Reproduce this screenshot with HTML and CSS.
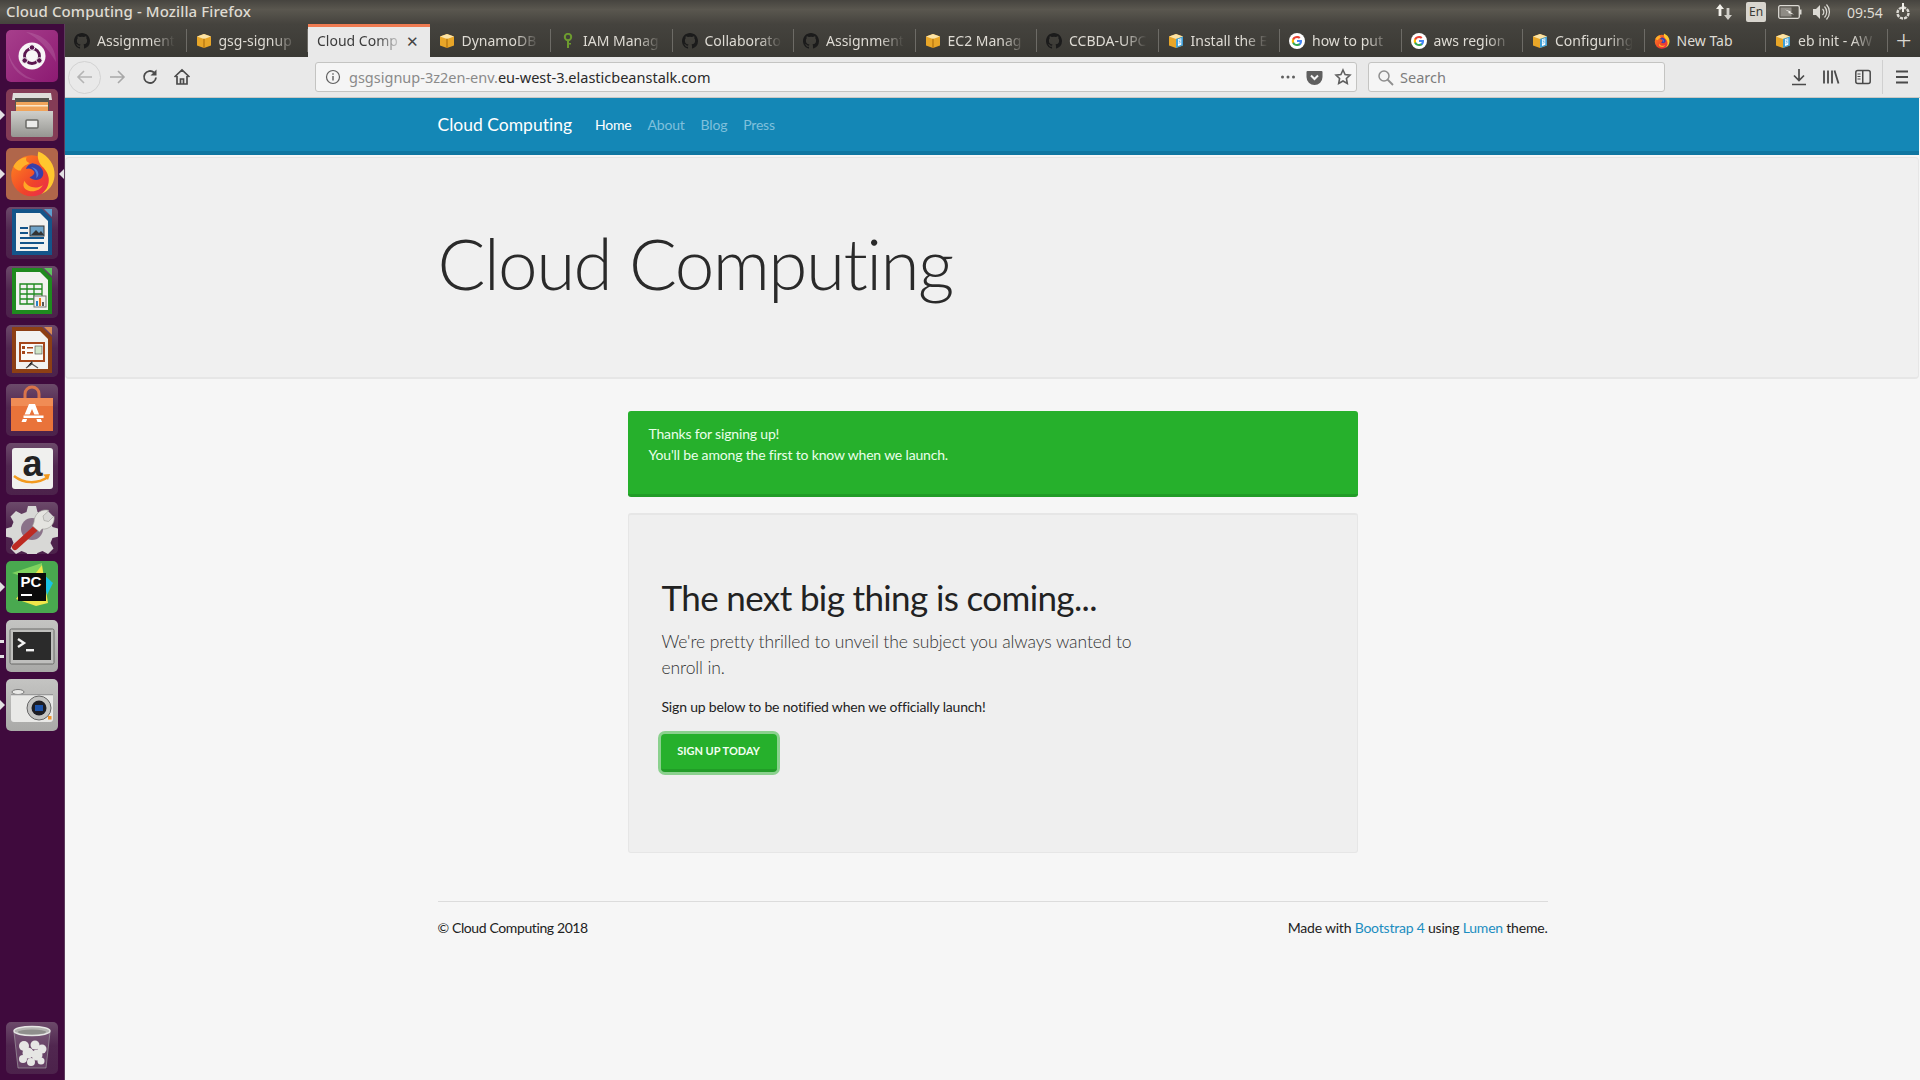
FILE: index.html
```html
<!DOCTYPE html>
<html lang="en">
<head>
<meta charset="utf-8">
<title>Cloud Computing</title>
<link rel="stylesheet" href="styles.css">
</head>
<body>
<svg class="defs" width="0" height="0" aria-hidden="true">
  <defs>
    <linearGradient id="fxbody" x1="0" y1="0" x2="1" y2="1"><stop offset="0" stop-color="#ff8a1f"/><stop offset=".6" stop-color="#f0442a"/><stop offset="1" stop-color="#e8245a"/></linearGradient>
    <linearGradient id="steel" x1="0" y1="0" x2="0" y2="1"><stop offset="0" stop-color="#cfcfcb"/><stop offset="1" stop-color="#969692"/></linearGradient>
  </defs>
  <symbol id="gh" viewBox="0 0 16 16"><path fill="#1b1b1b" d="M8 0C3.58 0 0 3.58 0 8c0 3.54 2.29 6.53 5.47 7.59.4.07.55-.17.55-.38v-1.49c-2.23.48-2.7-1.07-2.7-1.07-.36-.92-.89-1.17-.89-1.17-.73-.5.05-.49.05-.49.8.06 1.23.83 1.23.83.72 1.22 1.87.87 2.33.66.07-.52.28-.87.5-1.07-1.78-.2-3.64-.89-3.64-3.95 0-.87.31-1.59.82-2.15-.08-.2-.36-1.02.08-2.12 0 0 .67-.21 2.2.82a7.6 7.6 0 0 1 4 0c1.53-1.04 2.2-.82 2.2-.82.44 1.1.16 1.92.08 2.12.51.56.82 1.27.82 2.15 0 3.07-1.87 3.75-3.65 3.95.29.25.54.73.54 1.48v2.2c0 .21.15.46.55.38A8 8 0 0 0 16 8c0-4.42-3.58-8-8-8z"/></symbol>
  <symbol id="box" viewBox="0 0 16 16"><path fill="#e8a628" d="M1 3.5 8 1l7 2.5v9L8 15l-7-2.5z"/><path fill="#fbe3a6" d="M1 3.5 8 1l7 2.5L8 6z"/><path fill="#b97a12" d="M7.3 5.8h1.4V15H7.3z"/></symbol>
  <symbol id="doc" viewBox="0 0 16 16"><path fill="#e8a628" d="M1 3.5 8 1l7 2.5v9L8 15l-7-2.5z"/><path fill="#fbe3a6" d="M1 3.5 8 1l7 2.5L8 6z"/><path fill="#3f9fd8" d="M8 6l7-2.5v9L8 15z"/><path fill="#fff" d="M10 6.3l3.3-1.1v6.5L10 12.9z"/><path stroke="#3f9fd8" stroke-width=".7" d="M10.6 7.3l2.1-.7M10.6 8.8l2.1-.7M10.6 10.3l2.1-.7"/></symbol>
  <symbol id="goog" viewBox="0 0 16 16"><circle cx="8" cy="8" r="8" fill="#fff"/><path fill="#4285f4" d="M13 8.1c0-.4 0-.7-.1-1H8v2h2.8c-.1.6-.5 1.2-1 1.5v1.3h1.7c1-.9 1.5-2.2 1.5-3.8z"/><path fill="#34a853" d="M8 13c1.4 0 2.5-.5 3.5-1.1l-1.7-1.3c-.5.3-1.1.5-1.8.5-1.4 0-2.5-.9-2.9-2.2H3.3v1.4C4.2 12 6 13 8 13z"/><path fill="#fbbc05" d="M5.1 8.9c-.2-.6-.2-1.2 0-1.8V5.7H3.3c-.7 1.4-.7 3.1 0 4.6z"/><path fill="#ea4335" d="M8 5c.8 0 1.5.3 2 .8l1.5-1.5C10.600 3.500 9.400 3 8 3 6 3 4.200 4.100 3.300 5.700l1.800 1.400C5.500 5.900 6.600 5 8 5z"/></symbol>
  <symbol id="fx" viewBox="0 0 32 32"><circle cx="15.500" cy="17.500" r="14" fill="url(#fxbody)"/><path fill="#ffc72e" d="M20 1c7 3 11.500 9 11 16.500-.4 6-4 10.500-9 12.500 4-3 5.500-7 5-11-.5-4-3-6.500-5-8.500C20 8 19 4.500 20 1z"/><path fill="#ffb02a" d="M3 11c2-3 5-6 9-6-1 2 0 3 2 4-2 1-5 2-6 5-2 0-4-1-5-3z"/><path fill="#3a3fa8" d="M16 9c-2 .5-4 2-4.500 4 2-1 4.500 0 5.500 1.500s-1 3.500-3 4c2.500 2.500 6.500 2.500 8.500 0s1-8-6.500-9.500z"/><path fill="#4d7be0" d="M15 11.500c3 .5 5 2.500 5 5 0 1-.5 2-1.500 2.500 1-3-1-6-3.500-7.500z"/><path fill="#ffa726" d="M10.500 21c2 4.500 8 6 12.500 3-2 4-8 5.500-12 2.500-1.500-1.500-1.500-3-.5-5.500z"/></symbol>
</svg>

<header class="topbar">
  <span class="win-title">Cloud Computing - Mozilla Firefox</span>
  <div class="tray">
    <svg class="tray-net" width="20" height="20" viewBox="0 0 20 20"><path fill="#f2f0ea" d="M6 2 2 7h2.600v7h2.800V7H10z"/><path fill="#d0cec8" d="M14 18l4-5h-2.600V6h-2.800v7H10z"/></svg>
    <span class="tray-en">En</span>
    <svg class="tray-bat" width="24" height="16" viewBox="0 0 24 16"><rect x=".7" y="1.700" width="20.600" height="12.600" rx="1.500" fill="none" stroke="#dcdad4" stroke-width="1.300"/><rect x="2.500" y="3.500" width="11" height="9" fill="#8f8c85"/><rect x="21.500" y="5.500" width="2" height="5" fill="#dcdad4"/><path fill="#f2f0ea" d="M7 5.500l6 2-1 .5 4 2.500-6-1.500 1-1z"/></svg>
    <svg class="tray-vol" width="20" height="20" viewBox="0 0 20 20"><path fill="#dcdad4" d="M2 7h3l4-4v14l-4-4H2z"/><path fill="none" stroke="#dcdad4" stroke-width="1.200" d="M11.500 7a4 4 0 0 1 0 6M13.500 4.500a8 8 0 0 1 0 11M15.500 2.500a11 11 0 0 1 0 15" /></svg>
    <span class="tray-time">09:54</span>
    <svg class="tray-gear" width="18" height="20" viewBox="0 0 18 20"><circle cx="9" cy="11" r="5.500" fill="none" stroke="#dcdad4" stroke-width="2.400" stroke-dasharray="3.200 1"/><path stroke="#f2f0ea" stroke-width="2" d="M9 1v9"/></svg>
  </div>
</header>

<div class="desktop">
  <nav class="dock">
    <div class="tile t-ubuntu"><svg viewBox="0 0 52 52"><path fill="rgba(255,255,255,.12)" d="M20 2c18 2 30 14 30 30-8-14-18-24-30-30zM2 22c4 14 14 24 28 28C16 50 4 38 2 22z"/><circle cx="26" cy="26" r="13.500" fill="#f8f5f7"/><circle cx="26" cy="26" r="7.500" fill="none" stroke="#5b1650" stroke-width="2.800"/><circle cx="26" cy="17.500" r="2.800" fill="#5b1650" stroke="#f8f5f7"/><circle cx="18.700" cy="30.500" r="2.800" fill="#5b1650" stroke="#f8f5f7"/><circle cx="33.300" cy="30.500" r="2.800" fill="#5b1650" stroke="#f8f5f7"/></svg></div>
    <div class="tile t-files has-pip"><svg viewBox="0 0 52 52"><path fill="#dededa" d="M7 4h38l1 7H6z"/><path fill="#55554f" d="M9 9h34v12H9z"/><path fill="#f0a45a" d="M10 13h32v9H10z"/><path fill="#fbe6c8" d="M10 16h32v1.500H10z"/><path fill="url(#steel)" d="M5 22h42v24a2 2 0 0 1-2 2H7a2 2 0 0 1-2-2z"/><rect x="20" y="31" width="12" height="8" rx="1" fill="#ececea" stroke="#6a6a66" stroke-width="1.500"/></svg></div>
    <div class="tile t-fx has-pip has-pip-right"><svg viewBox="0 0 52 52"><use href="#fx" x="3" y="2" width="47" height="47"/></svg></div>
    <div class="tile t-glass"><svg viewBox="0 0 52 52"><path fill="#14558a" d="M6 2h30l10 10v36H6z"/><path fill="#f2f2f0" d="M10 6h24l8 8v30H10z"/><path fill="#5d9fd0" d="M38 2h8v8z"/><path fill="#14558a" d="M14 20h8v2h-8zM14 25h8v2h-8zM14 30h24v2H14zM14 35h24v2H14zM14 40h18v2H14z"/><rect x="24" y="19" width="14" height="10" fill="#6fa3c8" stroke="#333"/><path fill="#333" d="M25 28l5-5 3 3 2-2 3 4z"/></svg></div>
    <div class="tile t-glass"><svg viewBox="0 0 52 52"><path fill="#1f8a1f" d="M6 2h30l10 10v36H6z"/><path fill="#f2f2f0" d="M10 6h24l8 8v30H10z"/><path fill="#5fc35f" d="M38 2h8v8z"/><path fill="none" stroke="#1f8a1f" stroke-width="1.300" d="M14 18h22v20H14zM14 23h22M14 28h22M14 33h22M21 18v20M28 18v20"/><rect x="28" y="30" width="12" height="11" fill="#f2f2f0" stroke="#777"/><path fill="#2b7fc7" d="M30 35h2v5h-2z"/><path fill="#e77b1f" d="M33 32h2v8h-2z"/><path fill="#555" d="M36 36h2v4h-2z"/></svg></div>
    <div class="tile t-glass"><svg viewBox="0 0 52 52"><path fill="#8d3f14" d="M6 2h30l10 10v36H6z"/><path fill="#f2f2f0" d="M10 6h24l8 8v30H10z"/><path fill="#d98a55" d="M38 2h8v8z"/><rect x="14" y="18" width="24" height="18" fill="#fbfbf8" stroke="#a5461a" stroke-width="2"/><path fill="#a5461a" d="M16 21h3v3h-3zM16 26h3v3h-3zM21 22h6v1.500h-6zM21 27h6v1.500h-6z"/><rect x="29" y="21" width="7" height="8" fill="#cfe5c8" stroke="#444" stroke-width=".6"/><path stroke="#555" stroke-width="1.200" d="M26 36v3l-6 4M26 39l6 4"/></svg></div>
    <div class="tile t-glass"><svg viewBox="0 0 52 52"><path fill="none" stroke="#d9744a" stroke-width="3" d="M19 16v-6a7 7 0 0 1 14 0v6"/><path fill="#e9733a" d="M5 14h42v33H5z"/><path fill="#f08c55" d="M5 14h42v8H5z"/><path fill="#fff" d="M23 20h6l7 18h-4.500l-1.500-4h-8.500l-1.500 4h-4.500zM26 25l-2.500 6h5z"/><rect x="17" y="31" width="21" height="3.500" fill="#fff" stroke="#e9733a"/></svg></div>
    <div class="tile t-glass"><svg viewBox="0 0 52 52"><rect x="6" y="5" width="41" height="41" rx="3" fill="#f0f0ee"/><text class="amz" x="26.500" y="33" text-anchor="middle">a</text><path fill="none" stroke="#f29a1f" stroke-width="2.500" d="M8 33c10 8 24 8 34 1"/><path fill="#f29a1f" d="M37 31.500l7-.5-2 6z"/></svg></div>
    <div class="tile t-glass"><svg viewBox="0 0 52 52"><path fill="#d8d8d6" d="M22 4h8l1.500 6 5 2 5.500-3 5.500 5.500-3 5.500 2 5 6 1.500v8l-6 1.500-2 5 3 5.500-5.500 5.500-5.500-3-5 2-1.500 2h-8l-1.500-2-5-2-5.500 3-5.500-5.500 3-5.500-2-5-6-1.500v-8l6-1.500 2-5-3-5.500 5.500-5.500 5.500 3 5-2z"/><circle cx="26" cy="27" r="11" fill="#8a7289"/><path stroke="#bd2a22" stroke-width="6" stroke-linecap="round" d="M9 45l21-19"/><path fill="#e4e4e0" stroke="#9a9a96" stroke-width=".6" d="M28 20c0-7 6-13 13-12l2 .5-6 5.500 1 4.500 4.500 1 5.500-5.500c1.500 8-5 14-12 13l-2.500 3-7-6z"/></svg></div>
    <div class="tile t-pycharm has-pip"><svg viewBox="0 0 52 52"><path fill="#7fd35f" d="M6 12l30-10v20z"/><path fill="#f0e64a" d="M10 38l26-34 6 38-12 3z"/><path fill="#19c3e6" d="M36 12l11 10-6 12z"/><rect x="12" y="12" width="28" height="28" fill="#0b0b0b"/><text class="pc" x="14.500" y="26">PC</text><rect x="15" y="33" width="11" height="2" fill="#fff"/></svg></div>
    <div class="tile t-term has-pip has-pip-double"><svg viewBox="0 0 52 52"><rect x="4" y="9" width="44" height="35" rx="1.500" fill="#bfbfbd" stroke="#6a6a68"/><rect x="7" y="12" width="38" height="28" fill="#2b2b2b"/><path fill="none" stroke="#f2f2f2" stroke-width="2.400" d="M12 19l6 4-6 4"/><rect x="20" y="29" width="8" height="2.400" fill="#f2f2f2"/></svg></div>
    <div class="tile t-term has-pip"><svg viewBox="0 0 52 52"><path fill="#e9e9e7" d="M5 15h42v25a3 3 0 0 1-3 3H8a3 3 0 0 1-3-3z"/><ellipse cx="12" cy="13" rx="6" ry="2.500" fill="#e9e9e7" stroke="#777"/><path fill="#999" d="M5 15h42v1.200H5z"/><circle cx="33" cy="29" r="12" fill="#c4c4c2" stroke="#666"/><circle cx="33" cy="29" r="7.500" fill="#1d1d24"/><rect x="29" y="26" width="8" height="6" fill="#1c52a8"/><rect x="42" y="37" width="3.500" height="3.500" fill="#f0932b"/></svg></div>
    <div class="tile t-glass t-trash"><svg viewBox="0 0 52 52"><path fill="rgba(255,255,255,.14)" stroke="#aaa" stroke-width=".6" d="M8 10l4 36h28l4-36z"/><ellipse cx="26" cy="9" rx="18" ry="4.500" fill="#b5b5b2" stroke="#e6e6e4" stroke-width="1.500"/><ellipse cx="26" cy="10" rx="14" ry="2.500" fill="#8f8f8c"/><g fill="#e6e6e4"><circle cx="18" cy="24" r="5"/><circle cx="29" cy="23" r="4.500"/><circle cx="36" cy="27" r="4.500"/><circle cx="22" cy="31" r="5.500"/><circle cx="31" cy="33" r="5.500"/><circle cx="17" cy="37" r="4"/><circle cx="25" cy="40" r="4"/><circle cx="35" cy="39" r="3.500"/></g></svg></div>
  </nav>

  <div class="browser">
    <div class="tabstrip">
      <div class="tab"><svg class="fav"><use href="#gh"/></svg><span class="tab-label">Assignment</span></div>
      <div class="tab"><svg class="fav"><use href="#box"/></svg><span class="tab-label">gsg-signup</span></div>
      <div class="tab tab-active"><span class="tab-label">Cloud Comp</span><span class="tab-x">✕</span></div>
      <div class="tab"><svg class="fav"><use href="#box"/></svg><span class="tab-label">DynamoDB</span></div>
      <div class="tab"><svg class="fav" viewBox="0 0 16 16"><circle cx="8" cy="4" r="3.200" fill="none" stroke="#6d9b2f" stroke-width="2"/><path fill="#6d9b2f" d="M7 7h2v8H7zM9 10h2v1.500H9z"/></svg><span class="tab-label">IAM Manag</span></div>
      <div class="tab"><svg class="fav"><use href="#gh"/></svg><span class="tab-label">Collaborato</span></div>
      <div class="tab"><svg class="fav"><use href="#gh"/></svg><span class="tab-label">Assignment</span></div>
      <div class="tab"><svg class="fav"><use href="#box"/></svg><span class="tab-label">EC2 Manag</span></div>
      <div class="tab"><svg class="fav"><use href="#gh"/></svg><span class="tab-label">CCBDA-UPC</span></div>
      <div class="tab"><svg class="fav"><use href="#doc"/></svg><span class="tab-label">Install the E</span></div>
      <div class="tab"><svg class="fav"><use href="#goog"/></svg><span class="tab-label">how to put</span></div>
      <div class="tab"><svg class="fav"><use href="#goog"/></svg><span class="tab-label">aws region</span></div>
      <div class="tab"><svg class="fav"><use href="#doc"/></svg><span class="tab-label">Configuring</span></div>
      <div class="tab"><svg class="fav"><use href="#fx"/></svg><span class="tab-label tab-plain">New Tab</span></div>
      <div class="tab"><svg class="fav"><use href="#doc"/></svg><span class="tab-label">eb init - AW</span></div>
      <div class="tab-new">+</div>
    </div>

    <div class="toolbar">
      <div class="nav-btns">
        <span class="btn-back"><svg width="20" height="20" viewBox="0 0 20 20"><path fill="none" stroke="#b4b4b4" stroke-width="1.600" d="M17 10H3M9 4l-6 6 6 6"/></svg></span>
        <svg class="btn-fwd" width="20" height="20" viewBox="0 0 20 20"><path fill="none" stroke="#a8a8a8" stroke-width="1.600" d="M3 10h14M11 4l6 6-6 6"/></svg>
        <svg class="btn-reload" width="18" height="18" viewBox="0 0 18 18"><path fill="none" stroke="#4a4a4a" stroke-width="1.800" d="M15 9.500A6 6 0 1 1 13 4.500"/><path fill="#4a4a4a" d="M15.500 1.500v6h-6z"/></svg>
        <svg class="btn-home" width="18" height="18" viewBox="0 0 18 18"><path fill="none" stroke="#4a4a4a" stroke-width="1.700" d="M1.500 9 9 2l7.500 7M4 8v8h10V8M7.500 16v-5h3v5"/></svg>
      </div>
      <div class="urlbar">
        <svg class="url-info" width="16" height="16" viewBox="0 0 16 16"><circle cx="8" cy="8" r="6.500" fill="none" stroke="#5f5f5f" stroke-width="1.200"/><path fill="#5f5f5f" d="M7.300 7h1.400v4.500H7.300zM7.300 4.300h1.400v1.500H7.300z"/></svg>
        <span class="url-text"><span class="url-dim">gsgsignup-3z2en-env.</span>eu-west-3.elasticbeanstalk.com</span>
        <svg class="url-dots" width="16" height="16" viewBox="0 0 16 16"><circle cx="2.500" cy="8" r="1.500" fill="#5f5f5f"/><circle cx="8" cy="8" r="1.500" fill="#5f5f5f"/><circle cx="13.500" cy="8" r="1.500" fill="#5f5f5f"/></svg>
        <svg width="17" height="16" viewBox="0 0 16 16"><path fill="#5f5f5f" d="M1 2h14a1 1 0 0 1 1 1v5a8 8 0 0 1-16 0V3a1 1 0 0 1 1-1z"/><path fill="none" stroke="#f4f4f4" stroke-width="2" d="M4.500 6.500 8 10l3.500-3.500"/></svg>
        <svg width="18" height="18" viewBox="0 0 18 18"><path fill="none" stroke="#5f5f5f" stroke-width="1.600" d="M9 2l2.100 4.500 4.900.6-3.600 3.400.9 4.900L9 13l-4.300 2.400.9-4.900L2 7.100l4.900-.6z"/></svg>
      </div>
      <div class="searchbar">
        <svg width="17" height="17" viewBox="0 0 17 17"><circle cx="7" cy="7" r="5" fill="none" stroke="#8e8e8e" stroke-width="1.500"/><path stroke="#8e8e8e" stroke-width="1.800" d="M10.500 10.500 16 16"/></svg>
        <span>Search</span>
      </div>
      <div class="tool-right">
        <svg width="18" height="18" viewBox="0 0 18 18"><path fill="none" stroke="#4a4a4a" stroke-width="1.700" d="M9 1v11M4 7.500l5 5 5-5M2 16.500h14"/></svg>
        <svg width="18" height="18" viewBox="0 0 18 18"><path fill="none" stroke="#4a4a4a" stroke-width="1.800" d="M2 2.500v13M6 2.500v13M10 2.500v13M12.500 2.500l4 13"/></svg>
        <svg width="18" height="18" viewBox="0 0 18 18"><rect x="1.800" y="2.500" width="14.400" height="13" rx="2" fill="none" stroke="#4a4a4a" stroke-width="1.500"/><path fill="#4a4a4a" d="M8 3h1.500v12H8z"/><path stroke="#4a4a4a" d="M3.500 6h3M3.500 8.500h3M3.500 11h3"/></svg>
        <span class="tool-sep"></span>
        <svg width="18" height="18" viewBox="0 0 18 18"><path stroke="#4a4a4a" stroke-width="1.800" d="M3 3.500h12M3 9h12M3 14.500h12"/></svg>
      </div>
    </div>

    <main class="page">
      <div class="navbar">
        <div class="container nav-inner">
          <a class="brand">Cloud Computing</a>
          <a class="nav-link nav-active">Home</a>
          <a class="nav-link">About</a>
          <a class="nav-link">Blog</a>
          <a class="nav-link">Press</a>
        </div>
      </div>
      <div class="jumbo">
        <div class="container"><h1>Cloud Computing</h1></div>
      </div>
      <div class="content">
        <div class="alert">Thanks for signing up!<br>You'll be among the first to know when we launch.</div>
        <section class="card">
          <h2>The next big thing is coming...</h2>
          <p class="lead">We're pretty thrilled to unveil the subject you always wanted to enroll in.</p>
          <p class="note">Sign up below to be notified when we officially launch!</p>
          <a class="cta">SIGN UP TODAY</a>
        </section>
      </div>
      <footer class="container foot">
        <span class="foot-left">© Cloud Computing 2018</span>
        <span class="foot-right">Made with <a class="link">Bootstrap 4</a> using <a class="link">Lumen</a> theme.</span>
      </footer>
    </main>
  </div>
</div>
</body>
</html>
```

FILE: styles.css
```css
* { box-sizing: border-box; }
html, body { margin: 0; height: 100%; }
body { width: 1920px; height: 1080px; overflow: hidden; display: flex; flex-direction: column; background: #f6f6f6; font-family: "Lato", sans-serif; font-variant-ligatures: none; }
.defs { position: absolute; }

/* Ubuntu top panel */
.topbar { height: 24px; flex: none; display: flex; align-items: center; justify-content: space-between; padding-left: 6px; background: linear-gradient(#46443f, #5a574f 40%, #45433e); color: #dfdbd2; font: 500 15px "Noto Sans", sans-serif; }
.win-title { padding-bottom: 2px; letter-spacing: .1px; }
.tray { display: flex; align-items: center; height: 24px; }
.tray-net { margin-right: 12px; }
.tray-en { width: 20px; height: 20px; margin-right: 12px; background: #d8d5ce; color: #3a3a36; border-radius: 2px; font: 400 12px/20px "Noto Sans", sans-serif; text-align: center; }
.tray-bat { margin-right: 9px; }
.tray-vol { margin-right: 16px; }
.tray-time { width: 40px; margin-right: 7px; font: 400 14px "Noto Sans", sans-serif; }
.tray-gear { margin-right: 8px; }

.desktop { flex: 1; min-height: 0; display: flex; }

/* Launcher */
.dock { width: 65px; flex: none; display: flex; flex-direction: column; gap: 7px; padding: 6px 0 6px 6px; background: #3f0a3d; border-right: 1px solid #5d3a5c; }
.tile { width: 52px; height: 52px; border-radius: 5px; position: relative; flex: none; }
.tile svg { display: block; width: 52px; height: 52px; }
.t-ubuntu { background: linear-gradient(135deg, #a73f8c, #8c1a72); }
.t-files { background: #843c56; }
.t-fx { background: #b0664a; }
.t-glass { background: linear-gradient(#6c4a6a, #512750 45%, #4c224b); }
.t-pycharm { background: #49a94f; }
.t-term { background: linear-gradient(#c4c4c2, #a9a9a7); }
.t-trash { margin-top: auto; }
.has-pip::before { content: ""; position: absolute; left: -6px; top: 21px; border-left: 5px solid #e3e0e3; border-top: 5px solid transparent; border-bottom: 5px solid transparent; }
.has-pip-right::after { content: ""; position: absolute; right: -6px; top: 21px; border-right: 5px solid #e3e0e3; border-top: 5px solid transparent; border-bottom: 5px solid transparent; }
.has-pip-double::before { top: 20px; height: 12px; width: 4px; border: 0; border-top: 3px solid #e3e0e3; border-bottom: 3px solid #e3e0e3; }
.amz { font: 700 36px "Liberation Sans", sans-serif; fill: #222; }
.pc { font: 700 15px "Liberation Sans", sans-serif; fill: #fff; }

/* Browser */
.browser { flex: 1; min-width: 0; display: flex; flex-direction: column; }
.tabstrip { height: 33px; flex: none; display: flex; background: linear-gradient(#45433e, #3a3934); color: #dedbd4; font: 400 14px "Noto Sans", sans-serif; }
.tab { width: 121.5px; flex: none; display: flex; align-items: center; gap: 7px; padding: 0 12px 0 9px; position: relative; }
.tab::after { content: ""; position: absolute; right: 0; top: 5px; bottom: 5px; width: 1px; background: #6d6b66; }
.fav { width: 16px; height: 16px; flex: none; }
.tab-label { flex: 1; min-width: 0; white-space: nowrap; overflow: hidden; -webkit-mask-image: linear-gradient(90deg, #000 70%, transparent); mask-image: linear-gradient(90deg, #000 70%, transparent); }
.tab-plain { -webkit-mask-image: none; mask-image: none; }
.tab-active { background: #e9e9e9; color: #3c3c3c; border-top: 3px solid #ef7b52; padding: 0 11px 3px 9px; gap: 3px; }
.tab-active::after { display: none; }
.tab-x { font-size: 15px; color: #444; }
.tab-new { flex: 1; text-align: center; font: 300 28px/31px "Noto Sans", sans-serif; color: #d8d6d0; }

.toolbar { height: 41px; flex: none; display: flex; align-items: center; background: #e9e9e9; border-bottom: 1px solid #c9c8c5; font: 400 14.500px "Noto Sans", sans-serif; }
.nav-btns { width: 250px; flex: none; display: flex; align-items: center; padding-left: 3px; }
.btn-back { width: 33px; height: 33px; border: 1px solid #d2d2d2; border-radius: 50%; display: flex; align-items: center; justify-content: center; }
.btn-fwd { margin-left: 6px; }
.btn-reload { margin-left: 14px; }
.btn-home { margin-left: 14px; }
.urlbar { width: 1042px; height: 30px; flex: none; display: flex; align-items: center; gap: 11px; padding: 0 4px 0 9px; background: #f5f5f5; border: 1px solid #c4c4c2; border-radius: 3px; }
.url-text { flex: 1; color: #2a2a2a; margin-left: -3px; }
.url-dim { color: #8a8a8a; }
.url-dots { margin-right: -1px; }
.searchbar { width: 297px; height: 30px; flex: none; margin-left: 11px; display: flex; align-items: center; gap: 6px; padding-left: 8px; background: #f5f5f5; border: 1px solid #c4c4c2; border-radius: 3px; color: #7d7d7d; }
.tool-right { flex: 1; display: flex; align-items: center; justify-content: flex-end; gap: 14px; padding-right: 9px; }
.tool-sep { width: 1px; height: 34px; background: #d0d0d0; margin: 0 -4px; }

/* Page */
.page { flex: 1; min-height: 0; display: flex; flex-direction: column; color: #222; font-size: 14px; }
.container { width: 1110px; margin: 0 auto; }
.navbar { height: 57px; flex: none; margin-right: 1px; padding-left: 1px; background: #1487b6; border-bottom: 4px solid #0f76a1; }
.nav-inner { display: flex; align-items: center; height: 53px; }
.brand { color: #fff; font-size: 17.500px; margin-right: 23px; }
.nav-link { color: #7fc0dc; font-size: 14px; letter-spacing: -.2px; margin-right: 16px; }
.nav-active { color: #fff; }
.jumbo { height: 222px; flex: none; margin: 2px 1px 0 0; padding: 62px 0 0 1px; background: #f0f0f0; border: 1px solid #e6e6e6; border-bottom-width: 2px; border-radius: 4px; }
h1 { margin: 0; font-weight: 300; font-size: 71px; line-height: 1.2; letter-spacing: -1.55px; color: #2a2a2a; }
.content { width: 730px; margin: 32px auto 0; flex: none; align-self: center; }
.alert { height: 86px; padding: 12px 21px; background: #26b02c; border-bottom: 3px solid #219c27; border-radius: 3px; color: #eaffea; font-size: 14px; line-height: 21px; letter-spacing: -.17px; }
.card { height: 340px; margin-top: 16px; padding: 61px 33px 0; background: #efefef; border: 1px solid #e6e6e6; border-top-width: 2px; border-radius: 3px; }
h2 { margin: 0 0 11px; font-weight: 400; font-size: 35px; line-height: 42px; letter-spacing: -.63px; color: #222; }
.lead { margin: 0 0 15px; width: 480px; font-weight: 300; font-size: 17.500px; line-height: 26px; letter-spacing: -.1px; color: #333; }
.note { margin: 0 0 17px; font-size: 14px; line-height: 21px; letter-spacing: -.18px; color: #222; }
.cta { display: block; width: 116px; height: 38px; margin-left: -1px; text-align: center; background: #26b02c; border-bottom: 3px solid #219c27; border-radius: 4px; box-shadow: 0 0 0 3px #8bd18e; color: #f2fff2; font-size: 11px; font-weight: 700; line-height: 34px; }
.foot { display: flex; justify-content: space-between; margin-top: 48px; padding-top: 17px; border-top: 1px solid #dcdcdc; font-size: 14px; color: #222; }
.foot-left { letter-spacing: -.39px; }
.foot-right { letter-spacing: -.21px; }
.link { color: #1c8dc0; }
```
